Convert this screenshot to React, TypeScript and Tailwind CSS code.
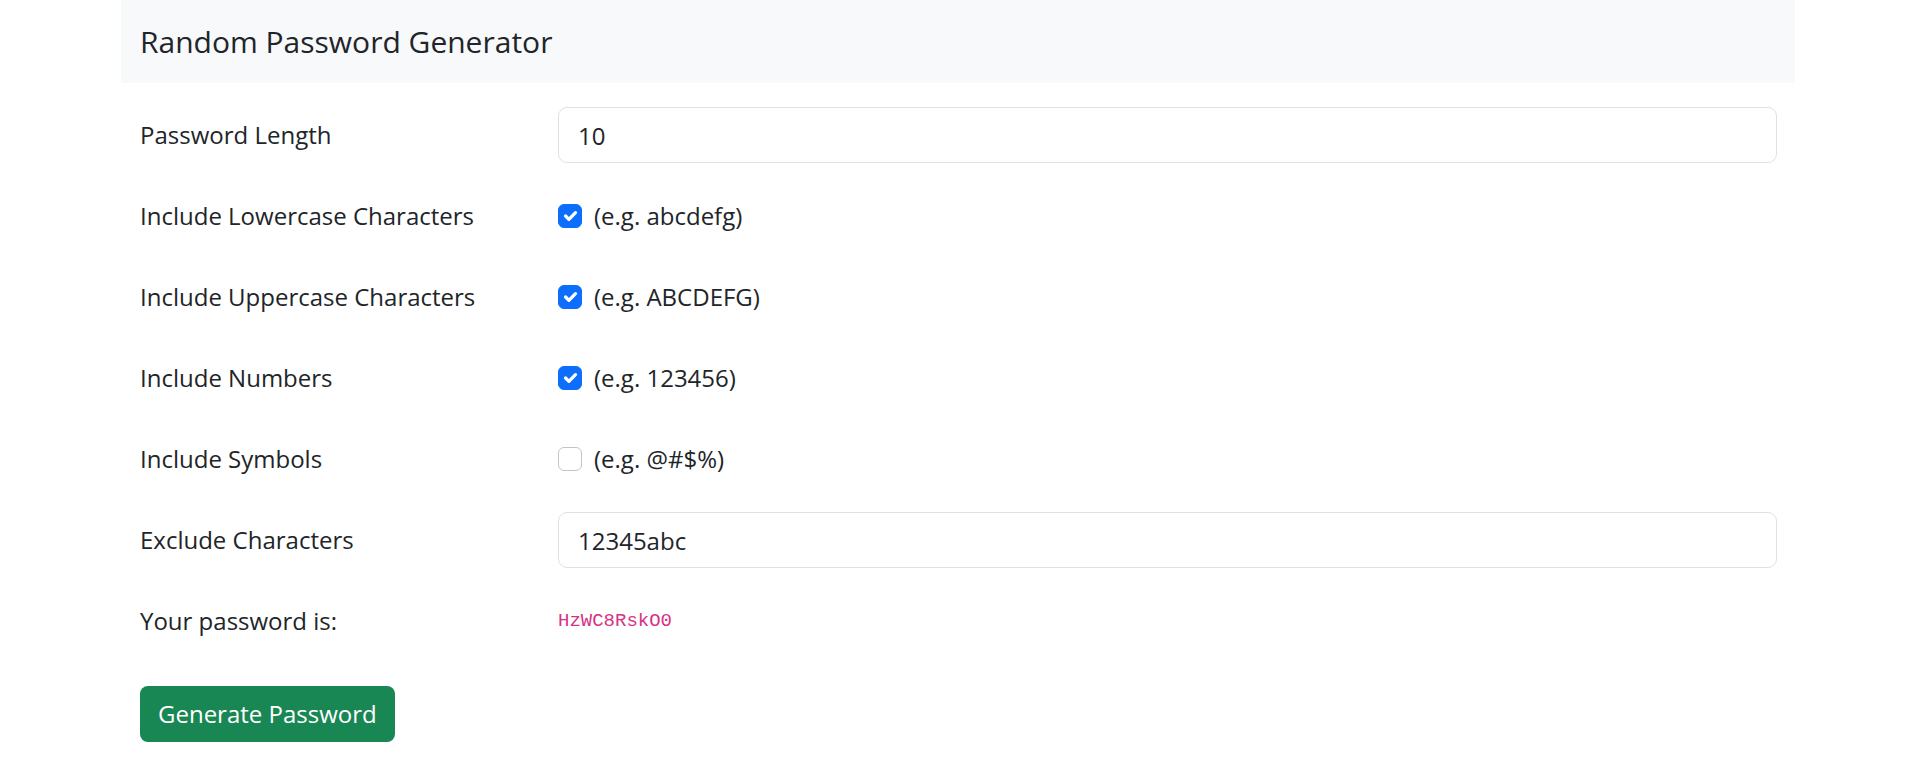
import { useState } from "react";

const rows = [
  { key: "lower", label: "Include Lowercase Characters", hint: "(e.g. abcdefg)" },
  { key: "upper", label: "Include Uppercase Characters", hint: "(e.g. ABCDEFG)" },
  { key: "num", label: "Include Numbers", hint: "(e.g. 123456)" },
  { key: "sym", label: "Include Symbols", hint: "(e.g. @#$%)" },
];

const CheckBox = ({ checked, onClick }: { checked: boolean; onClick: () => void }) => (
  <button
    type="button"
    onClick={onClick}
    className={`flex items-center justify-center w-[24px] h-[24px] rounded-[6px] border ${
      checked ? "bg-[#0d6efd] border-[#0d6efd]" : "bg-white border-[#c4c4c4]"
    }`}
  >
    {checked && (
      <svg width="22" height="22" viewBox="0 0 20 20">
        <path
          d="M6 10l3 3l6-6"
          fill="none"
          stroke="#fff"
          strokeWidth="3"
          strokeLinecap="round"
          strokeLinejoin="round"
        />
      </svg>
    )}
  </button>
);

export default function App() {
  const [checks, setChecks] = useState<Record<string, boolean>>({
    lower: true,
    upper: true,
    num: true,
    sym: false,
  });

  return (
    <div className="min-h-screen bg-white text-[#212529] font-['Open_Sans',sans-serif]">
      <div className="w-[1674px] ml-[121px]">
        <div className="h-[83px] flex items-center px-[19px] bg-[#f8f9fa]">
          <h4 className="text-[30px] leading-none">Random Password Generator</h4>
        </div>

        <div className="flex flex-col gap-[25px] pt-[24px] pl-[19px] pr-[18px] text-[24px]">
          <div className="flex items-center h-[56px]">
            <label className="w-[418px] shrink-0">Password Length</label>
            <input
              type="number"
              defaultValue={10}
              className="flex-1 h-[56px] px-[19px] border border-[#dee2e6] rounded-[9px] outline-none text-[24px]"
            />
          </div>

          {rows.map((r) => (
            <div key={r.key} className="flex items-center h-[56px]">
              <label className="w-[418px] shrink-0">{r.label}</label>
              <div className="flex items-center gap-[12px]">
                <CheckBox
                  checked={checks[r.key]}
                  onClick={() => setChecks((prev) => ({ ...prev, [r.key]: !prev[r.key] }))}
                />
                <span>{r.hint}</span>
              </div>
            </div>
          ))}

          <div className="flex items-center h-[56px]">
            <label className="w-[418px] shrink-0">Exclude Characters</label>
            <input
              type="text"
              defaultValue="12345abc"
              className="flex-1 h-[56px] px-[19px] border border-[#dee2e6] rounded-[9px] outline-none text-[24px]"
            />
          </div>

          <div className="flex items-center h-[56px]">
            <label className="w-[418px] shrink-0">Your password is:</label>
            <code className="text-[19px] text-[#d63384] font-['Liberation_Mono',monospace]">
              HzWC8RskO0
            </code>
          </div>

          <div className="mt-[12px]">
            <button className="h-[56px] px-[18px] bg-[#198754] text-white rounded-[8px] text-[24px]">
              Generate Password
            </button>
          </div>
        </div>
      </div>
    </div>
  );
}
